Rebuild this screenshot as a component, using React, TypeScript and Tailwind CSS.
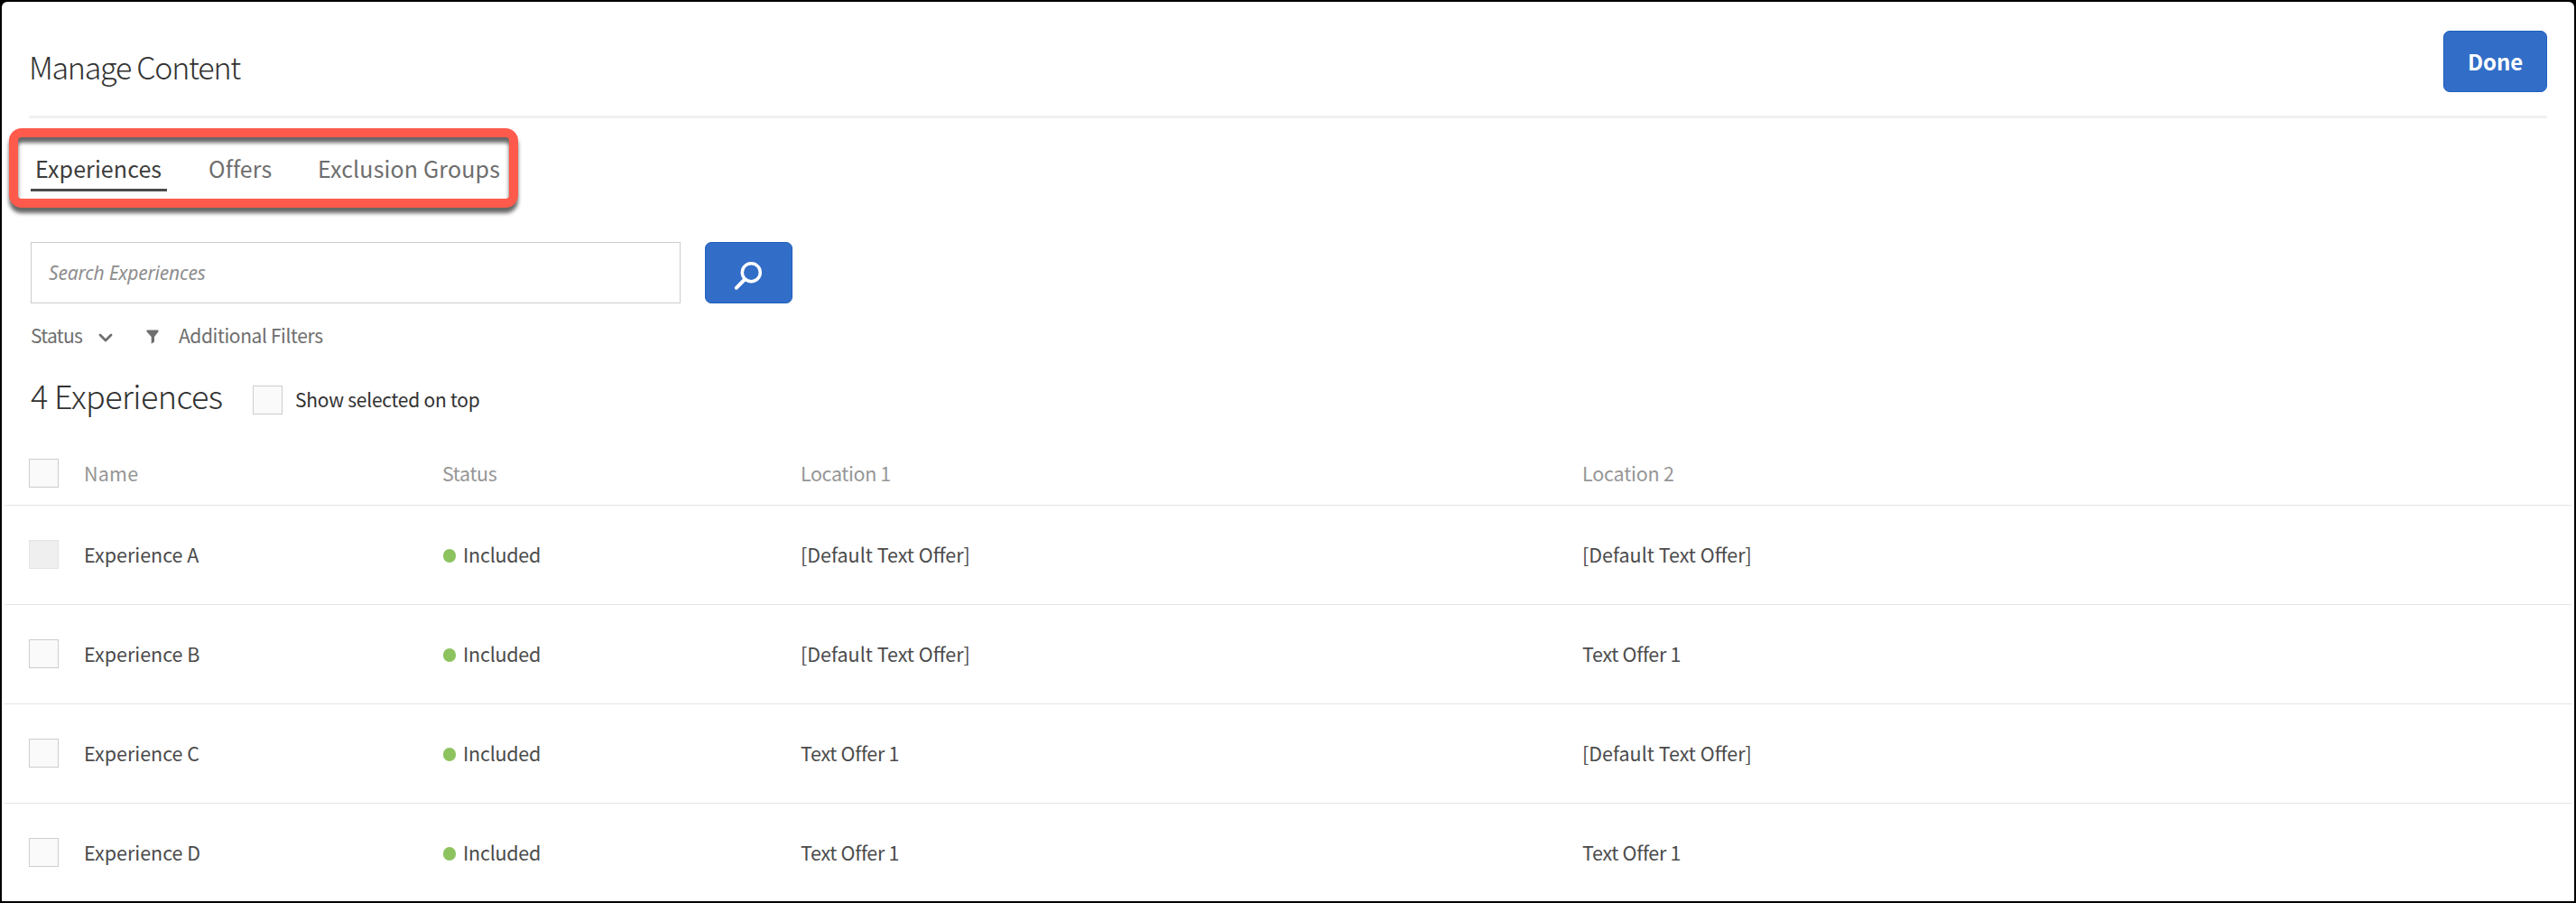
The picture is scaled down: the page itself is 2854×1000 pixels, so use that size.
type Row = { name: string; status: string; location1: string; location2: string; disabled?: boolean };

const rows: Row[] = [
  { name: "Experience A", status: "Included", location1: "[Default Text Offer]", location2: "[Default Text Offer]", disabled: true },
  { name: "Experience B", status: "Included", location1: "[Default Text Offer]", location2: "Text Offer 1" },
  { name: "Experience C", status: "Included", location1: "Text Offer 1", location2: "[Default Text Offer]" },
  { name: "Experience D", status: "Included", location1: "Text Offer 1", location2: "Text Offer 1" },
];

const columns = "grid grid-cols-[61px_397px_397px_866px_1fr] items-center pl-[27px]";

function Checkbox({ disabled = false }: { disabled?: boolean }) {
  return (
    <span
      role="checkbox"
      aria-checked="false"
      aria-disabled={disabled}
      className={`block h-[32px] w-[33px] shrink-0 border ${disabled ? "border-[#e4e4e4] bg-[#efefef]" : "border-[#cdcdcd] bg-[#fafafa]"}`}
    />
  );
}

function OfferText({ text }: { text: string }) {
  return <span className={text.startsWith("[") ? "" : "tracking-[-0.3px]"}>{text}</span>;
}

export default function App() {
  return (
    <div className="h-[1000px] w-[2854px] overflow-hidden bg-black p-[2px] font-['Noto_Sans_CJK_SC','Noto_Sans',sans-serif] whitespace-nowrap">
      <main className="flex h-[996px] flex-col overflow-hidden rounded-t-[6px] bg-white">
        <header className="mx-[30px] flex h-[129px] shrink-0 justify-between border-b-[3px] border-[#f0f0f0]">
          <h1 className="mt-[47px] text-[34px] leading-[50px] font-light tracking-[-1.25px] text-[#323232]">Manage Content</h1>
          <button className="mt-[32px] h-[68px] w-[115px] rounded-[7px] border border-[#1e5fbe] bg-[#326ec8] text-[24px] leading-[40px] font-bold tracking-[-0.1px] text-white">
            Done
          </button>
        </header>

        <nav className="relative ml-[32px] flex h-[81px] shrink-0 self-start text-[25px] text-[#6e6e6e]">
          <div className="absolute top-[11px] left-[-24px] h-[88px] w-[564px] rounded-[14px] border-[10px] border-[#ff5a4b] [filter:drop-shadow(0_6px_2px_rgba(0,0,0,0.6))]" />
          <a className="relative w-[151px] border-b-[3px] border-[#4b4b4b] pt-[35px] pl-[5px] leading-[40px] tracking-[0.1px] text-[#3c3c3c]">
            Experiences
          </a>
          <a className="relative ml-[46px] w-[121px] pt-[35px] leading-[40px] tracking-[0.1px]">Offers</a>
          <a className="relative pt-[35px] leading-[40px] tracking-[0.15px]">Exclusion Groups</a>
        </nav>

        <div className="mt-[56px] ml-[32px] flex shrink-0 gap-[27px]">
          <input
            placeholder="Search Experiences"
            className="h-[68px] w-[720px] border border-[#cdcdcd] px-[19px] font-['Noto_Sans',sans-serif] text-[21px] tracking-[-0.2px] italic outline-none placeholder:text-[#8e8e8e]"
          />
          <button aria-label="Search" className="h-[68px] w-[97px] rounded-[7px] border border-[#1e5fbe] bg-[#326ec8]">
            <svg viewBox="0 0 95 66" className="h-[66px] w-[95px] fill-none stroke-white" strokeLinecap="round">
              <circle cx="50.3" cy="32.7" r="10" strokeWidth="3.5" />
              <path d="M43 40.5 33.8 49.8" strokeWidth="4" />
            </svg>
          </button>
        </div>

        <div className="mt-[15px] ml-[32px] flex h-[40px] shrink-0 items-center text-[21px] leading-[38px] tracking-[-0.4px] text-[#6e6e6e]">
          <span className="w-[75px] tracking-[-0.7px]">Status</span>
          <svg viewBox="0 0 16 10" className="mt-[5px] h-[10px] w-[16px] fill-none stroke-[#6e6e6e]" strokeWidth="2.8" strokeLinecap="round" strokeLinejoin="round">
            <path d="M2 2 8 8 14 2" />
          </svg>
          <svg viewBox="0 0 14 16" className="mt-[4px] ml-[37px] h-[16px] w-[14px] fill-[#6e6e6e]">
            <path d="M0.5 0.5H13.5V2.2L9 8V13.5L5.7 15.8V8L0.5 2.2Z" />
          </svg>
          <span className="ml-[22px]">Additional Filters</span>
        </div>

        <div className="mt-[24px] ml-[32px] flex h-[56px] shrink-0 items-center">
          <h2 className="w-[246px] pb-[13px] text-[36px] leading-[50px] font-light tracking-[-0.6px] text-[#323232]">4 Experiences</h2>
          <Checkbox />
          <span className="ml-[14px] pb-[2px] text-[21px] leading-[32px] tracking-[-0.25px] text-[#323232]">Show selected on top</span>
        </div>

        <section className="mx-[3px] mt-[18px] shrink-0 text-[21.5px] leading-[32px]">
          <div className={`${columns} h-[71px] border-b border-[#e4e4e4] text-[#969696]`}>
            <Checkbox />
            <span className="tracking-[0.2px]">Name</span>
            <span className="tracking-[-0.4px]">Status</span>
            <span className="tracking-[-0.4px]">Location 1</span>
            <span className="tracking-[-0.2px]">Location 2</span>
          </div>
          {rows.map((row) => (
            <div key={row.name} className={`${columns} h-[110px] border-b border-[#e4e4e4] pb-[1px] text-[#4b4b4b] last:border-transparent`}>
              <Checkbox disabled={row.disabled} />
              <span>{row.name}</span>
              <span className="flex items-center tracking-[-0.25px]">
                <i className="mt-[3px] mr-[8px] ml-[1px] h-[15px] w-[14px] rounded-full bg-[#8cc35f]" />
                {row.status}
              </span>
              <OfferText text={row.location1} />
              <OfferText text={row.location2} />
            </div>
          ))}
        </section>
      </main>
    </div>
  );
}
